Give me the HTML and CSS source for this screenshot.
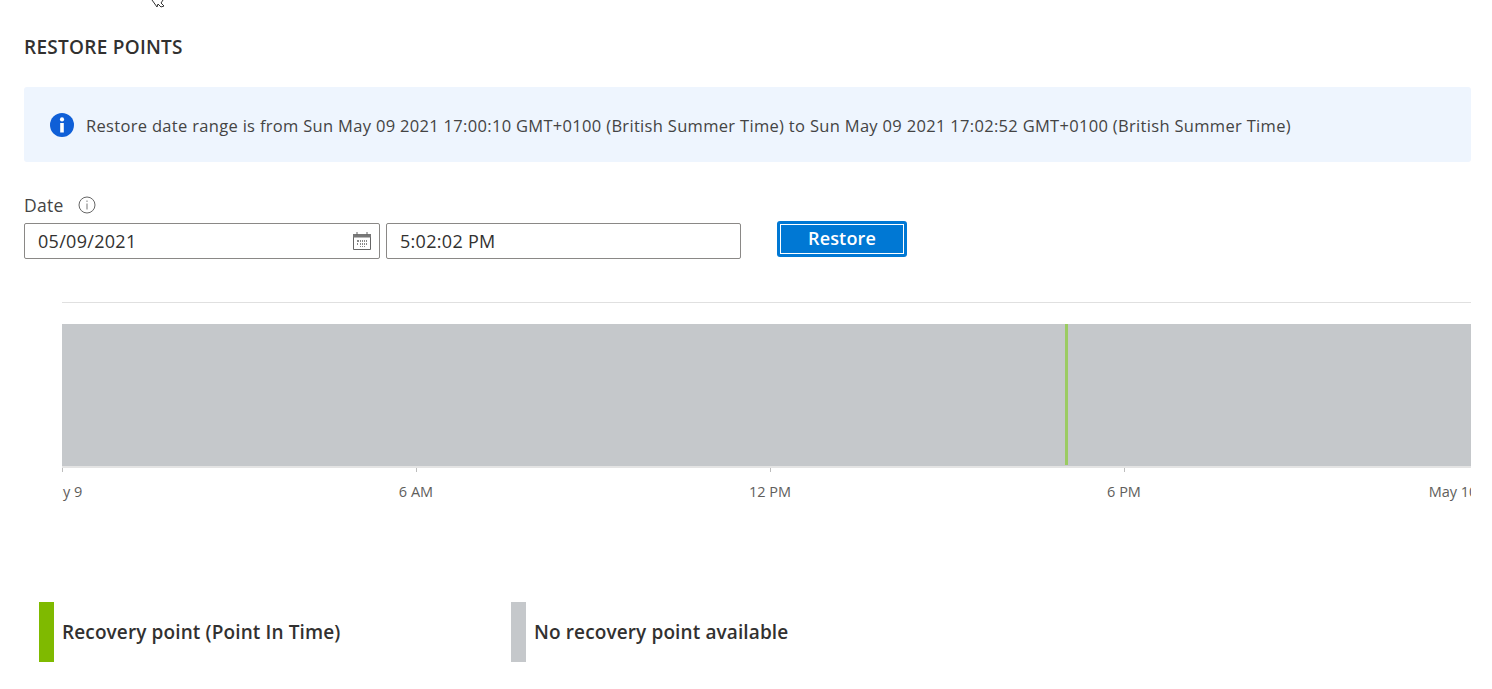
FILE: index.html
```html
<!DOCTYPE html>
<html lang="en">
<head>
<meta charset="utf-8">
<title>Restore points</title>
<link rel="stylesheet" href="styles.css">
</head>
<body>
<svg class="cursor" width="16" height="8" viewBox="0 0 16 8"><path d="M1 0 L6 7 L7 4 L10 7 L13 6 L10 3 L12 0" fill="#fff" stroke="#333" stroke-width="1"/></svg>
<main class="page">
  <h2 class="title">RESTORE POINTS</h2>
  <div class="banner">
    <svg class="banner-icon" width="24" height="24" viewBox="0 0 24 24"><circle cx="12" cy="12" r="12" fill="#0f5fd7"/><circle cx="12" cy="6.4" r="2.1" fill="#fff"/><rect x="10.2" y="10" width="3.6" height="9.5" fill="#fff"/></svg>
    <span class="banner-text">Restore date range is from Sun May 09 2021 17:00:10 GMT+0100 (British Summer Time) to Sun May 09 2021 17:02:52 GMT+0100 (British Summer Time)</span>
  </div>
  <div class="form">
    <div class="field">
      <div class="label">
        <span>Date</span>
        <svg width="18" height="18" viewBox="0 0 18 18"><circle cx="9" cy="9" r="8" fill="none" stroke="#666" stroke-width="1"/><rect x="8.5" y="7.5" width="1" height="6" fill="#777"/><rect x="8.5" y="4.5" width="1" height="1.4" fill="#777"/></svg>
      </div>
      <div class="inputs">
        <div class="input input-date">
          <span>05/09/2021</span>
          <svg width="18" height="18" viewBox="0 0 18 18"><path d="M.5 2.5h17v15H.5z" fill="#fff" stroke="#666"/><rect x="0" y="2" width="18" height="3.5" fill="#777"/><path d="M4 0v3M14 0v3" stroke="#666"/><path d="M4 8h2v2H4zM7 8h1v2H7zM9 8h1v2H9zM11 8h1v2h-1zM13 8h1v2h-1zM4 11h1v2H4zM7 11h1v2H7zM9 11h1v2H9zM11 11h1v2h-1zM13 11h1v2h-1zM7 14h1v1H7zM9 14h1v1H9zM11 14h1v1h-1z" fill="#888"/></svg>
        </div>
        <div class="input input-time"><span>5:02:02 PM</span></div>
      </div>
    </div>
    <button class="restore" type="button">Restore</button>
  </div>
  <section class="chart">
    <div class="plot"><div class="marker"></div></div>
    <div class="axis">
      <div class="tick" style="left:0"><i></i><span>May 9</span></div>
      <div class="tick" style="left:354px"><i></i><span>6 AM</span></div>
      <div class="tick" style="left:708px"><i></i><span>12 PM</span></div>
      <div class="tick" style="left:1062px"><i></i><span>6 PM</span></div>
      <div class="tick tick-end" style="left:1391px"><span>May 10</span></div>
    </div>
  </section>
  <div class="legend">
    <div class="legend-item legend-item-first"><div class="swatch swatch-green"></div><span>Recovery point (Point In Time)</span></div>
    <div class="legend-item"><div class="swatch swatch-grey"></div><span>No recovery point available</span></div>
  </div>
</main>
</body>
</html>
```
FILE: styles.css
```css
* { box-sizing: border-box; }
html, body { margin: 0; height: 100%; overflow: hidden; background: #fff; }
body { font-family: "Open Sans", "Noto Sans", sans-serif; color: #323130; }
.cursor { position: absolute; left: 151px; top: 0; }
.page { padding: 36px 21px 0 24px; }
.title { margin: 0; font-size: 19px; line-height: 22px; font-weight: 600; letter-spacing: 0.27px; color: #323130; }
.banner { margin-top: 29px; height: 75px; background: #eef5fe; border-radius: 3px; display: flex; align-items: center; padding-left: 26px; gap: 12px; }
.banner-icon { flex: none; }
.banner-text { font-size: 16.5px; line-height: 24px; margin-top: 2px; letter-spacing: 0.315px; color: #444; white-space: nowrap; }
.form { margin-top: 31px; display: flex; align-items: flex-end; gap: 36px; }
.label { height: 30px; display: flex; align-items: flex-start; gap: 14px; font-size: 17.5px; line-height: 24px; letter-spacing: 0.3px; color: #444; }
.label svg { margin-top: 3px; }
.inputs { display: flex; gap: 6px; }
.input { height: 36px; border: 1px solid #8a8886; border-radius: 2px; display: flex; align-items: center; justify-content: space-between; padding: 0 8px 0 13px; font-size: 18px; letter-spacing: 0.3px; color: #323130; }
.input-date { width: 356px; }
.input-time { width: 355px; }
.restore { width: 130px; height: 36px; margin-bottom: 2px; background: #0078d4; color: #fff; border: 3px solid #0078d4; border-radius: 3px; outline: 1px solid #fff; outline-offset: -4px; font: 600 18px "Open Sans", sans-serif; letter-spacing: 0.15px; padding: 0 0 2px; }
.chart { margin: 43px 0 0 38px; border-top: 1px solid #e0e0e0; padding-top: 21px; }
.plot { height: 142px; background: #c5c8cb; position: relative; }
.marker { position: absolute; left: 1003px; top: 0; bottom: 1px; width: 3px; background: #9bcb62; }
.axis { height: 50px; border-top: 2px solid #e4e4e4; position: relative; overflow: hidden; }
.tick { position: absolute; top: 0; }
.tick i { display: block; width: 1px; height: 4px; background: #bdbdbd; }
.tick span { position: absolute; top: 14px; left: 0; transform: translateX(-50%); font-size: 14.5px; line-height: 20px; color: #605e5c; white-space: nowrap; }
.legend { margin: 86px 0 0 15px; display: flex; }
.legend-item { display: flex; align-items: center; gap: 8px; font-size: 19px; font-weight: 600; letter-spacing: 0.12px; color: #323130; }
.legend-item-first { width: 472px; }
.swatch { width: 15px; height: 60px; }
.swatch-green { background: #7fba00; }
.swatch-grey { background: #c5c8cb; }
```
